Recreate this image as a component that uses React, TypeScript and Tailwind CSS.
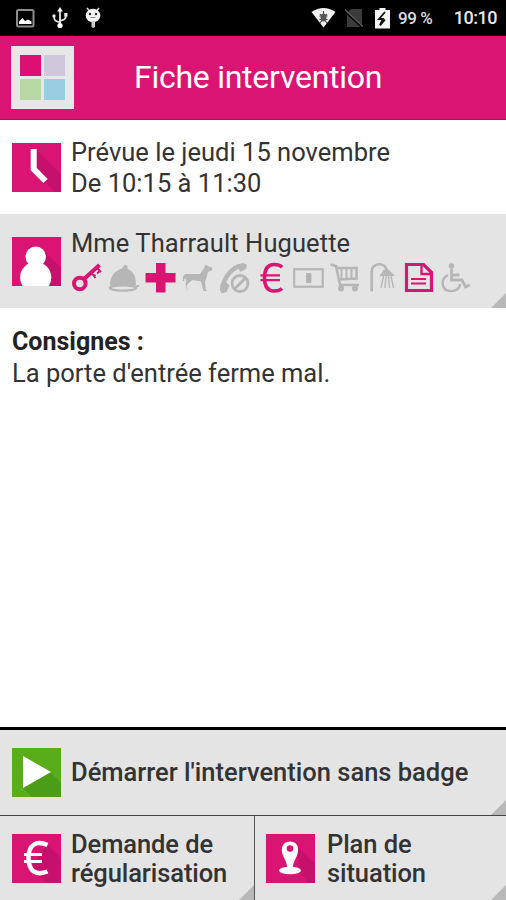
import type { ReactNode } from "react";

const GREY = "#b6b6b6";
const PINK = "#da1472";
const SHADE = "#c5116b";

function Glyph({ children }: { children: ReactNode }) {
  return (
    <svg width="32" height="32" viewBox="0 0 32 32" fill="none" className="shrink-0">
      {children}
    </svg>
  );
}

function Corner() {
  return (
    <svg width="15" height="15" viewBox="0 0 15 15" className="absolute right-0 bottom-0">
      <path d="M15 0V15H0z" fill="#b9b9b9" />
    </svg>
  );
}

function Tile({ children, color = PINK }: { children: ReactNode; color?: string }) {
  return (
    <svg width="49" height="49" viewBox="0 0 49 49" className="shrink-0">
      <rect width="49" height="49" fill={color} />
      {children}
    </svg>
  );
}

function StatusBar() {
  return (
    <div className="flex h-9 shrink-0 items-center bg-black pl-4 pr-[9px] text-white">
      <svg width="19" height="19" viewBox="0 0 19 19" className="mt-px">
        <rect x="1" y="1" width="16.5" height="16.5" rx="1.5" fill="none" stroke="#8c8c8c" strokeWidth="2" />
        <path d="M3 15v-2.5L6.500 9l2.500 3 3-1.500 3.500 2V15z" fill="#fff" />
      </svg>
      <svg width="16" height="22" viewBox="0 0 16 22" className="ml-[17px]">
        <path d="M8 3v16M8 15.500c-4-1-6-2-6-6M8 14c4-1 6-2 6-6" fill="none" stroke="#e8e8e8" strokeWidth="1.800" />
        <circle cx="8" cy="18.500" r="2.600" fill="#fff" />
        <circle cx="2" cy="9" r="1.700" fill="#e8e8e8" />
        <rect x="12.200" y="6" width="3.300" height="3.500" fill="#e8e8e8" />
        <path d="M8 0l2.800 4.500H5.200z" fill="#fff" />
      </svg>
      <svg width="18" height="22" viewBox="0 0 18 22" className="ml-[16px]">
        <path d="M3 1l3 3.500M15 1l-3 3.500" stroke="#ddd" strokeWidth="1.500" />
        <ellipse cx="9" cy="8.500" rx="7.300" ry="6.800" fill="#f4f4f4" />
        <path d="M7.500 14h3.500v6l-1.800 1L7.500 20z" fill="#ccc" />
        <circle cx="6" cy="7" r="1.200" fill="#222" />
        <circle cx="12" cy="7" r="1.200" fill="#222" />
        <path d="M6.500 10.500h5" stroke="#888" />
      </svg>
      <svg width="25" height="20" viewBox="0 0 25 20" className="ml-[209px]">
        <path d="M.5 4Q12.500-4 24.500 4L12.500 19.500z" fill="#f2f2f2" />
        <path d="M12.500 3v3M8.500 8h8M8.500 11.500h8M9 15l7-9M16 15L9 6" stroke="#444" strokeWidth="1.100" />
        <ellipse cx="12.500" cy="9.500" rx="3" ry="4" fill="#555" />
      </svg>
      <svg width="19" height="20" viewBox="0 0 19 20" className="ml-[9px]">
        <path d="M6 1h11v18H2V5z" fill="#3b3b3b" />
        <path d="M0 2.500L17.500 19" stroke="#000" strokeWidth="3" />
        <path d="M0 1.500L18 18.500" stroke="#5a5a5a" strokeWidth="1.700" />
      </svg>
      <svg width="15" height="21" viewBox="0 0 15 21" className="ml-[11px]">
        <path d="M4.500 0h6v2H15v18.500H0V2h4.500z" fill="#f5f5f5" />
        <path d="M10 4L4 11h4l-3 6M5 17.500l5-6" fill="none" stroke="#111" strokeWidth="1.800" />
      </svg>
      <span className="ml-[8px] whitespace-nowrap text-[17px] leading-9 font-medium tracking-[-0.400px] text-[#dedede]">99 %</span>
      <span className="ml-auto whitespace-nowrap text-[18px] leading-9 font-medium tracking-[-0.500px] text-[#e8e8e8]">10:10</span>
    </div>
  );
}

function CareIcons() {
  return (
    <div className="mt-[3px] flex gap-[5px]">
      <Glyph>
        <circle cx="8.800" cy="21.500" r="5.800" stroke={PINK} strokeWidth="4" />
        <path d="M13 17L28.500 3" stroke={PINK} strokeWidth="4" />
        <path d="M21 11.500l3.500 4.500M26.500 6.500l3.500 3.500M22.500 14.500l2-1.800M26 11.500l3.500-3" stroke={PINK} strokeWidth="1.900" />
      </Glyph>
      <Glyph>
        <path d="M2 23C2 13 8 8.500 14 6.500L17 2.500l2.500 1.500v3C26 9.500 28 15 28 23l-2.500 1.500H4z" fill={GREY} />
        <ellipse cx="15" cy="26" rx="13" ry="2.600" stroke={GREY} strokeWidth="2.200" fill="#e4e4e4" />
        <path d="M26 25l5-1.200" stroke={GREY} strokeWidth="2" />
      </Glyph>
      <Glyph>
        <path d="M11 1h9.500v10h10v9.500h-10v10H11v-10H.5V11H11z" fill={PINK} />
      </Glyph>
      <Glyph>
        <path d="M.8 19L1 14.500 3.500 12H18l4.500-6.500L23 2.500l3 1.800 4.500 1.500-.5 2.500-4 1.500-1.500 6-1.500 3.500.8 8.200 1.200 1.500h-3.500l-2.500-9.500-8.500-1.500-3.500 2.800-2.500 3 1.300 5H5.500L3.500 23l.7-5L3 16l-1 3z" fill={GREY} />
      </Glyph>
      <Glyph>
        <path d="M3.500 28C4 17 11 7 21 4" stroke={GREY} strokeWidth="4.500" />
        <path d="M18.500 2.500L24 1l4 2-1 4-6 3zM1.500 22l5-2.500 4 4L7.500 30l-5 1.500L1 28z" fill={GREY} />
        <circle cx="21" cy="21.500" r="8" fill="#e4e4e4" stroke={GREY} strokeWidth="2.800" />
        <path d="M15.500 27l11-11" stroke={GREY} strokeWidth="3" />
      </Glyph>
      <Glyph>
        <path d="M26 5.200C24 3 21 2.500 18 2.500c-7.500 0-9.500 6-9.500 13.500S11 29 18 29c3 0 6-.5 8-2.500" stroke={PINK} strokeWidth="3.500" />
        <path d="M4.500 13.300H24M4.500 18.200H24" stroke={PINK} strokeWidth="2.300" />
      </Glyph>
      <Glyph>
        <rect x="1.200" y="7.200" width="28.500" height="17.500" stroke={GREY} strokeWidth="2.200" />
        <rect x="13" y="11" width="5.500" height="10" rx="1" fill={GREY} />
        <path d="M15.800 13v6" stroke="#a4a4a4" />
      </Glyph>
      <Glyph>
        <path d="M.5 2.500l5.500 1.500 4 19H29M6 6h20.500v10.500L9 17.500" stroke={GREY} strokeWidth="2.600" />
        <path d="M11.500 7v10M16.500 7v10M21.500 7v9.500" stroke={GREY} strokeWidth="2" />
        <circle cx="11" cy="26.500" r="3" fill={GREY} />
        <circle cx="25" cy="26.500" r="3" fill={GREY} />
      </Glyph>
      <Glyph>
        <path d="M4.700 29.500V10C4.700 0 19 0 19.500 8" stroke={GREY} strokeWidth="2.700" />
        <path d="M12.500 14L17 7.500h4.500L28 14z" fill={GREY} />
        <path d="M16.500 14L14 26M19 14l-1 12M21.500 14l1 12M24 14l2.500 12" stroke={GREY} strokeWidth="1.400" />
      </Glyph>
      <Glyph>
        <path d="M2.500 2.500h17l8 8v18h-25z" stroke={PINK} strokeWidth="3.200" />
        <path d="M17.500 3v9H27" stroke={PINK} strokeWidth="2.300" />
        <path d="M7 17h15M7 21.500h15" stroke={PINK} strokeWidth="2.200" />
      </Glyph>
      <Glyph>
        <circle cx="10.500" cy="4" r="2.800" fill={GREY} />
        <path d="M10.500 7v11H21l3.500 7 4.500-2M10.500 13h8" stroke={GREY} strokeWidth="2.800" />
        <path d="M7 13C-.5 17-.5 28 9 29c6 .5 10-3 10-7" stroke={GREY} strokeWidth="2.500" />
      </Glyph>
    </div>
  );
}

export default function App() {
  return (
    <div className="flex h-[900px] w-[506px] flex-col overflow-hidden bg-white font-[Roboto,sans-serif] text-[#333]">
      <StatusBar />

      <header className="flex h-[84px] shrink-0 items-center border-b border-[#c00863] bg-[#da1472] pl-[11px]">
        <div className="grid size-[63px] grid-cols-2 gap-[3px] bg-[#e7e7e7] p-[9px]">
          <div className="bg-[#dc0f72]" />
          <div className="bg-[#cfc8dd]" />
          <div className="bg-[#b7d8a2]" />
          <div className="bg-[#99cde2]" />
        </div>
        <h1 className="ml-[60px] pb-[2px] whitespace-nowrap text-[32px] leading-9 tracking-[-0.260px] text-white">Fiche intervention</h1>
      </header>

      <section className="flex h-[94px] shrink-0 items-center pl-3">
        <Tile>
          <path d="M25 7L49 31V49H43L33 39 22 27z" fill={SHADE} />
          <path d="M21.700 6v20L33.500 38" fill="none" stroke="#fff" strokeWidth="6" />
        </Tile>
        <p className="ml-[10px] pt-[2px] whitespace-nowrap text-[25.500px] leading-[31px] tracking-[0.020px]">
          Prévue le jeudi 15 novembre
          <br />
          De 10:15 à 11:30
        </p>
      </section>

      <section className="relative flex h-[94px] shrink-0 bg-[#e4e4e4] pl-3">
        <div className="pt-[23px]">
          <Tile>
            <path d="M31 13L49 31V49H20z" fill={SHADE} />
            <circle cx="23.700" cy="19.800" r="10.200" fill="#fff" />
            <circle cx="23.700" cy="40.500" r="15.600" fill="#fff" />
          </Tile>
        </div>
        <div className="ml-[10px] pt-[14px]">
          <p className="whitespace-nowrap text-[25.500px] leading-[31px] tracking-[0.100px]">Mme Tharrault Huguette</p>
          <CareIcons />
        </div>
        <Corner />
      </section>

      <main className="flex-1 pt-[18px] pl-3 text-[25.500px] leading-[31px]">
        <h2 className="text-[25px] leading-8 font-bold text-[#222]">Consignes :</h2>
        <p>La porte d'entrée ferme mal.</p>
      </main>

      <footer className="shrink-0 border-t-[3px] border-black">
        <div className="relative flex h-[85px] items-center bg-[#e4e4e4] pl-3">
          <Tile color="#58ad18">
            <path d="M38 24l11 11v14H20L11 40z" fill="#4b9d17" />
            <path d="M11 8L39 24 11 40z" fill="#fff" />
          </Tile>
          <span className="ml-[10px] pb-[2px] whitespace-nowrap text-[25.500px] leading-[30px] font-medium">Démarrer l'intervention sans badge</span>
          <Corner />
        </div>
        <div className="flex h-[85px] border-t border-[#444] bg-[#e4e4e4]">
          <div className="relative flex w-[254px] items-center pl-3">
            <Tile>
              <path d="M35 10L49 24V49H34L19 34z" fill={SHADE} />
              <path d="M35.500 11C24 6 16.500 11 16.500 24S24 42 35.500 37.500" fill="none" stroke="#fff" strokeWidth="4.500" />
              <path d="M12 20.500h18M12 27.500h18" stroke="#fff" strokeWidth="3" />
            </Tile>
            <p className="ml-[10px] pt-[2px] text-[25.500px] leading-[29px] font-medium tracking-[-0.080px] whitespace-nowrap">
              Demande de
              <br />
              régularisation
            </p>
            <Corner />
          </div>
          <div className="relative flex flex-1 items-center border-l border-[#555] pl-[11px]">
            <Tile>
              <path d="M31 12L49 30V49H43L34 39z" fill={SHADE} />
              <ellipse cx="24" cy="36.500" rx="11" ry="3.800" fill="#fff" />
              <path d="M24 7.500c-9 0-9.500 9-6.500 15 2.500 5 3.800 8 3.800 13h5.400c0-5 1.300-8 3.800-13 3-6 2.500-15-6.500-15z" fill="#fff" />
              <circle cx="24" cy="14.500" r="3.300" fill={PINK} />
            </Tile>
            <p className="ml-[12px] pt-[2px] text-[25.500px] leading-[29px] font-medium tracking-[-0.080px] whitespace-nowrap">
              Plan de
              <br />
              situation
            </p>
            <Corner />
          </div>
        </div>
      </footer>
    </div>
  );
}
